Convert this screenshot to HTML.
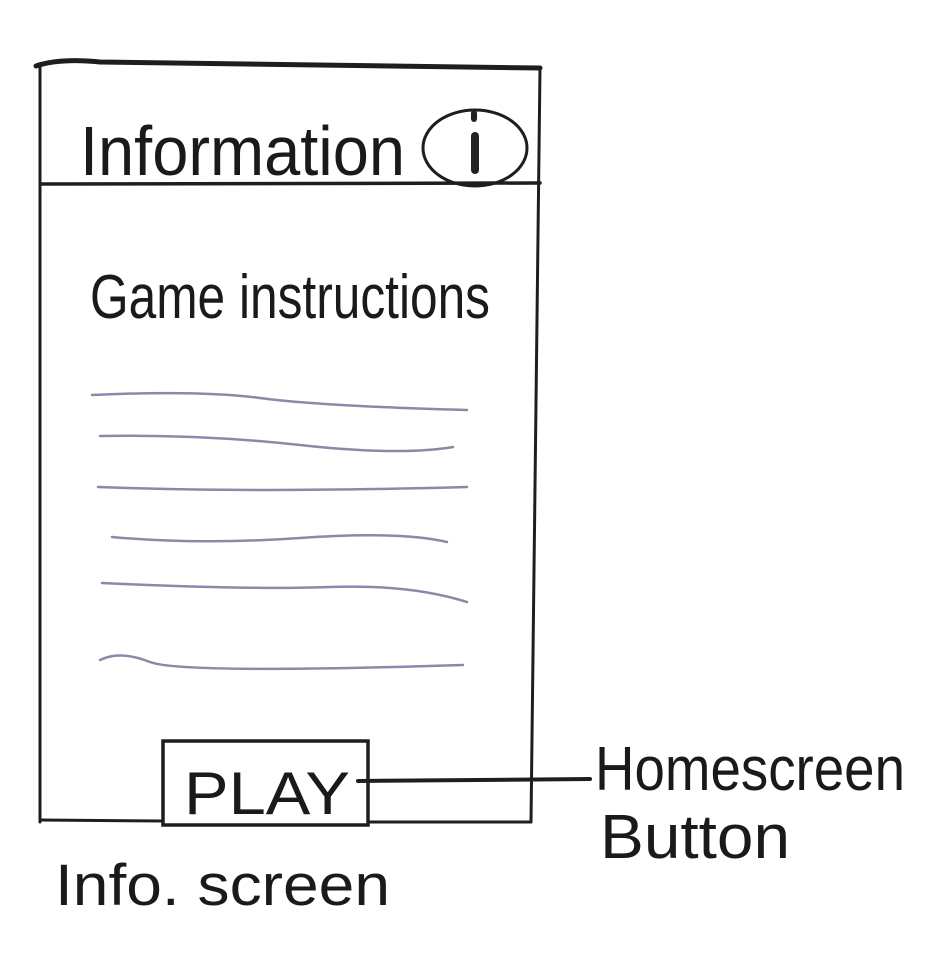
<!DOCTYPE html>
<html><head><meta charset="utf-8"><style>
html,body{margin:0;padding:0;background:#fff;}
svg{display:block}
text{font-family:"Liberation Sans",sans-serif;fill:#1a1a1a}
</style></head><body>
<svg width="949" height="957" viewBox="0 0 949 957">
<g stroke="#1e1e1e" fill="none" stroke-linecap="round">
<path d="M36 66 Q60 58 100 62 L540 68" stroke-width="5"/>
<path d="M40 66 L40 822" stroke-width="3"/>
<path d="M540 68 L531 822" stroke-width="3"/>
<path d="M40 820 L162 821 M368 822 L531 822" stroke-width="3"/>
<path d="M42 184 L540 183" stroke-width="3.5"/>
<ellipse cx="475" cy="148" rx="52" ry="38" stroke-width="3"/>
<rect x="163" y="741" width="205" height="84" stroke-width="3.5"/>
<path d="M358 781 L590 779" stroke-width="4"/>
</g>
<g stroke="#8a8aa8" fill="none" stroke-width="2.5" stroke-linecap="round">
<path d="M92 395 Q200 390 260 398 T467 410"/>
<path d="M100 436 Q200 434 300 445 T453 447"/>
<path d="M98 487 Q250 493 467 487"/>
<path d="M112 537 Q200 545 300 538 T447 542"/>
<path d="M102 583 Q250 590 330 587 T467 602"/>
<path d="M100 660 Q120 650 150 662 T463 665"/>
</g>
<rect x="471" y="132" width="8" height="42" rx="4" fill="#222"/>
<rect x="471" y="110" width="6" height="12" rx="3" fill="#222"/>
<text x="80" y="175" font-size="70" textLength="325" lengthAdjust="spacingAndGlyphs">Information</text>
<text x="90" y="318" font-size="62" textLength="400" lengthAdjust="spacingAndGlyphs">Game instructions</text>
<text x="184" y="814" font-size="60" textLength="166" lengthAdjust="spacingAndGlyphs">PLAY</text>
<text x="595" y="790" font-size="62" textLength="310" lengthAdjust="spacingAndGlyphs">Homescreen</text>
<text x="600" y="858" font-size="62" textLength="190" lengthAdjust="spacingAndGlyphs">Button</text>
<text x="55" y="905" font-size="58" textLength="335" lengthAdjust="spacingAndGlyphs">Info. screen</text>
</svg>
</body></html>
